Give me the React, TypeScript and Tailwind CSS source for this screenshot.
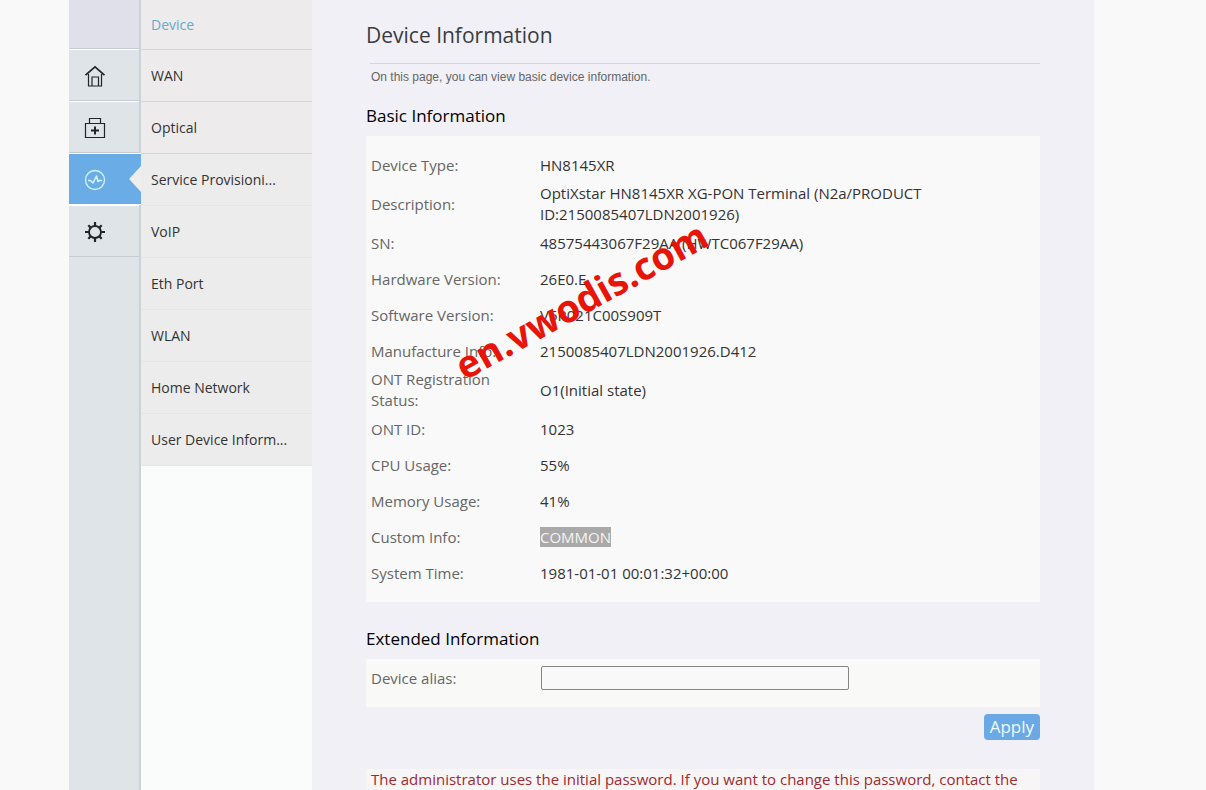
import { useState } from 'react';
import clsx from 'clsx';

interface InfoRow {
  label: string;
  value: string;
  selected?: boolean;
}

const MENU = [
  'Device',
  'WAN',
  'Optical',
  'Service Provisioni...',
  'VoIP',
  'Eth Port',
  'WLAN',
  'Home Network',
  'User Device Inform...',
];

const BASIC_INFO: InfoRow[] = [
  { label: 'Device Type:', value: 'HN8145XR' },
  { label: 'Description:', value: 'OptiXstar HN8145XR XG-PON Terminal (N2a/PRODUCT ID:2150085407LDN2001926)' },
  { label: 'SN:', value: '48575443067F29AA (HWTC067F29AA)' },
  { label: 'Hardware Version:', value: '26E0.E' },
  { label: 'Software Version:', value: 'V5R021C00S909T' },
  { label: 'Manufacture Info:', value: '2150085407LDN2001926.D412' },
  { label: 'ONT Registration Status:', value: 'O1(Initial state)' },
  { label: 'ONT ID:', value: '1023' },
  { label: 'CPU Usage:', value: '55%' },
  { label: 'Memory Usage:', value: '41%' },
  { label: 'Custom Info:', value: 'COMMON', selected: true },
  { label: 'System Time:', value: '1981-01-01 00:01:32+00:00' },
];

function HomeIcon() {
  return (
    <svg className="w-6 h-6" viewBox="0 0 24 24" fill="none" stroke="currentColor">
      <path strokeWidth={1.7} d="M2.500 11.200 12 2.800l9.500 8.400" />
      <path strokeWidth={1.2} d="M5.500 10v12h13V10M9 22v-9h6.500v9" />
    </svg>
  );
}

function KitIcon() {
  return (
    <svg className="w-6 h-6" viewBox="0 0 24 24" fill="none" stroke="currentColor">
      <path strokeWidth={1.2} d="M2.500 7.500h19v14h-19zM6.500 7.500v-5h11v5" />
      <path strokeWidth={2} d="M12 10.500v8M8 14.500h8" />
    </svg>
  );
}

function PulseIcon() {
  return (
    <svg className="w-6 h-6" viewBox="0 0 24 24" fill="none" stroke="currentColor" strokeLinejoin="round">
      <circle cx="12" cy="12" r="9.500" strokeWidth={1.3} />
      <path strokeWidth={1.6} d="M5 12.500h2.500l2.500 2.500 3.500-7 1.500 5.500 1.500-1H19" />
    </svg>
  );
}

function GearIcon() {
  return (
    <svg className="w-6 h-6" viewBox="0 0 24 24" fill="none" stroke="currentColor">
      <circle cx="12" cy="12" r="6" strokeWidth={1.9} />
      <path
        strokeWidth={2.2}
        d="M12 6V2M12 22v-4M6 12H2M22 12h-4M7.800 7.800 5.300 5.300M18.700 18.700l-2.500-2.500M7.800 16.200l-2.500 2.500M18.700 5.300l-2.500 2.500"
      />
    </svg>
  );
}

const SECTIONS = [
  { name: 'Home', icon: <HomeIcon /> },
  { name: 'Setup', icon: <KitIcon /> },
  { name: 'System information', icon: <PulseIcon /> },
  { name: 'Advanced', icon: <GearIcon /> },
];

function Rail() {
  const [active, setActive] = useState(2);

  return (
    <nav className="w-[72px] shrink-0 bg-[#dfe4e9] border-r-2 border-[#cdd2d8] text-[#20252a]">
      <div className="h-[49px] bg-[#dfe0ea] border-b border-[#c5cbd0]" />
      {SECTIONS.map((section, i) => (
        <button
          key={section.name}
          aria-label={section.name}
          onClick={() => setActive(i)}
          className={clsx(
            'relative flex items-center h-[52px] pl-[14px] pt-px border-y border-t-white',
            i === active
              ? 'w-[72px] bg-[#6aace6] border-b-white text-[#d5f3ff]'
              : 'w-full bg-[#dfe4e9] border-b-[#c5cbd0]'
          )}
        >
          {section.icon}
          {i === active && (
            <svg className="absolute right-0 top-3 w-3 h-[26px]" viewBox="0 0 12 26">
              <path d="M12 0v26L0 13z" fill="#eeeeef" />
            </svg>
          )}
        </button>
      ))}
    </nav>
  );
}

function SubMenu() {
  return (
    <nav className="w-[171px] shrink-0 bg-[#fafbfb] text-sm text-[#333]">
      {MENU.map((item, i) => (
        <a
          key={item}
          href="#"
          className={clsx(
            'flex items-center pl-[10px] border-b whitespace-nowrap',
            i === 0 ? 'h-[50px] text-[#69a9cc]' : 'h-[52px]',
            i < 3 ? 'bg-[#eeebed] border-[#d6d6d9]' : 'bg-[#ececec] border-[#e6e6e7]'
          )}
        >
          {item}
        </a>
      ))}
    </nav>
  );
}

export default function App() {
  const [alias, setAlias] = useState('');

  return (
    <div className="relative min-h-screen flex bg-[#f9f9f9] pl-[69px] pr-28 font-['Open_Sans','Noto_Sans',sans-serif]">
      <Rail />
      <SubMenu />

      <main className="flex-1 min-w-0 bg-[#f0f0f6] pl-[54px] pr-[54px]">
        <h1 className="pt-[21px] text-[21px] leading-7 text-[#3a3c40]">Device Information</h1>
        <p className="mt-[14px] ml-1 pl-px border-t border-[#d3d5dc] pt-1 font-['Liberation_Sans',Arial,sans-serif] text-xs leading-[18px] text-[#666]">
          On this page, you can view basic device information.
        </p>

        <h2 className="mt-[18px] text-[17px] leading-6 text-black">Basic Information</h2>
        <div className="mt-2 bg-[#f9f9f9] py-[11px] pl-[5px]">
          <table className="w-full table-fixed text-[15px] leading-[21px]">
            <tbody>
              {BASIC_INFO.map((row) => (
                <tr key={row.label} className="h-9">
                  <th scope="row" className="w-[169px] pr-8 py-0 text-left font-normal text-[#666]">
                    {row.label}
                  </th>
                  <td className="pr-[100px] py-0 text-[#333]">
                    {row.selected ? <span className="bg-[#a9a9a9] text-[#f4f4f4]">{row.value}</span> : row.value}
                  </td>
                </tr>
              ))}
            </tbody>
          </table>
        </div>

        <h2 className="mt-[25px] text-[17px] leading-6 text-black">Extended Information</h2>
        <form onSubmit={(e) => e.preventDefault()}>
          <div className="mt-2 flex items-center bg-[#f9f9f8] h-12 pl-[5px] pb-[10px]">
            <label htmlFor="alias" className="w-[170px] text-[15px] text-[#666]">
              Device alias:
            </label>
            <input
              id="alias"
              type="text"
              value={alias}
              onChange={(e) => setAlias(e.target.value)}
              className="w-[308px] h-6 px-1 border border-[#858585] rounded-xs bg-[#f9f9f9] text-sm"
            />
          </div>
          <div className="flex justify-end mt-[7px]">
            <button type="submit" className="h-[26px] px-1.5 rounded bg-[#6aa9e5] text-[17px] leading-6 text-[#f0fcff]">
              Apply
            </button>
          </div>
        </form>

        <p className="mt-[29px] bg-[#f7f5f6] pl-[5px] text-[15px] leading-[21px] text-[#9c2b30] whitespace-nowrap">
          The administrator uses the initial password. If you want to change this password, contact the
        </p>
      </main>

      <div className="absolute left-[440px] top-[270px] w-[280px] text-center -rotate-29 font-bold text-[38px] leading-[60px] text-[#e81408] pointer-events-none">
        en.vwodis.com
      </div>
    </div>
  );
}
